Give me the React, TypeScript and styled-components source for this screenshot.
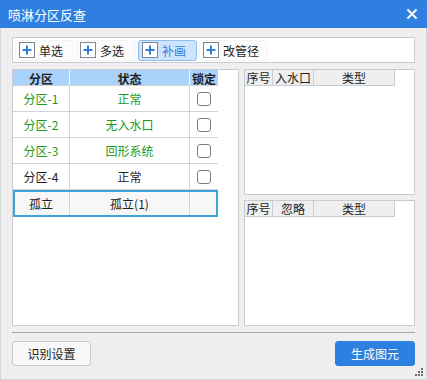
import React from 'react';
import styled, { createGlobalStyle } from 'styled-components';

const GlobalStyle = createGlobalStyle`
  html, body {
    margin: 0;
    padding: 0;
    background: #efefef;
  }
  * {
    box-sizing: border-box;
  }
`;

const FONT = `"Microsoft YaHei", "Noto Sans CJK SC", "Noto Sans", sans-serif`;

const TOOLS = [
  { label: '单选', width: 59 },
  { label: '多选', width: 60 },
  { label: '补画', width: 59, active: true },
  { label: '改管径', width: 69 },
];

const ZONES = [
  { name: '分区-1', state: '正常', green: true },
  { name: '分区-2', state: '无入水口', green: true },
  { name: '分区-3', state: '回形系统', green: true },
  { name: '分区-4', state: '正常', green: false },
];

const PlusIcon = () => (
  <svg width="16" height="16" viewBox="0 0 16 16">
    <rect x="0.5" y="0.5" width="15" height="15" fill="#fff" stroke="#7f8790" />
    <path d="M8 3.5v9M3.5 8h9" stroke="#2f7fdb" strokeWidth="2" />
  </svg>
);

const App = () => {
  return (
    <>
      <GlobalStyle />
      <Window>
        <TitleBar>
          <span>喷淋分区反查</span>
          <CloseIcon width="12" height="12" viewBox="0 0 12 12">
            <path d="M1.5 1.5l9 9M10.5 1.5l-9 9" stroke="#fff" strokeWidth="2" />
          </CloseIcon>
        </TitleBar>

        <Body>
          <Toolbar>
            {TOOLS.map((t) => (
              <ToolButton key={t.label} $active={!!t.active} $w={t.width}>
                <PlusIcon />
                <span>{t.label}</span>
              </ToolButton>
            ))}
          </Toolbar>

          <Main>
            <ZonePanel>
              <ZoneTable>
                <ZoneRow $head>
                  <ZoneCell $head>分区</ZoneCell>
                  <ZoneCell $head>状态</ZoneCell>
                  <ZoneCell $head>锁定</ZoneCell>
                </ZoneRow>
                {ZONES.map((z) => (
                  <ZoneRow key={z.name}>
                    <ZoneCell $green={z.green}>{z.name}</ZoneCell>
                    <ZoneCell $green={z.green}>{z.state}</ZoneCell>
                    <ZoneCell>
                      <Check />
                    </ZoneCell>
                  </ZoneRow>
                ))}
                <ZoneRow $selected>
                  <ZoneCell>孤立</ZoneCell>
                  <ZoneCell>孤立(1)</ZoneCell>
                  <ZoneCell />
                </ZoneRow>
              </ZoneTable>
            </ZonePanel>

            <SideColumn>
              <ListPanel>
                <ListHead>
                  <HeadCell $w={28}>序号</HeadCell>
                  <HeadCell $w={41}>入水口</HeadCell>
                  <HeadCell $w={81}>类型</HeadCell>
                </ListHead>
              </ListPanel>
              <ListPanel>
                <ListHead>
                  <HeadCell $w={28}>序号</HeadCell>
                  <HeadCell $w={41}>忽略</HeadCell>
                  <HeadCell $w={81}>类型</HeadCell>
                </ListHead>
              </ListPanel>
            </SideColumn>
          </Main>

          <Divider />

          <Footer>
            <Button>识别设置</Button>
            <Button $primary>生成图元</Button>
          </Footer>
        </Body>

        <Grip width="9" height="9" viewBox="0 0 9 9">
          <rect x="6" y="0" width="2" height="2" fill="#6e6e6e" />
          <rect x="3" y="3" width="2" height="2" fill="#6e6e6e" />
          <rect x="6" y="3" width="2" height="2" fill="#6e6e6e" />
          <rect x="0" y="6" width="2" height="2" fill="#6e6e6e" />
          <rect x="3" y="6" width="2" height="2" fill="#6e6e6e" />
          <rect x="6" y="6" width="2" height="2" fill="#6e6e6e" />
        </Grip>
      </Window>
    </>
  );
};

export default App;

const Window = styled.div`
  position: relative;
  width: 427px;
  height: 380px;
  background: #efefef;
  border: 1px solid #d4d6da;
  border-top: none;
  font-family: ${FONT};
  font-size: 12px;
  color: #1e1e1e;
  display: flex;
  flex-direction: column;
`;

const TitleBar = styled.div`
  height: 28px;
  margin: 0 -1px;
  background: #2e7fdf;
  color: #fff;
  font-size: 13px;
  display: flex;
  align-items: center;
  justify-content: space-between;
  padding: 0 9px 0 8px;
`;

const CloseIcon = styled.svg`
  display: block;
`;

const Body = styled.div`
  flex: 1;
  display: flex;
  flex-direction: column;
  padding: 9px 11px 0 11px;
`;

const Toolbar = styled.div`
  height: 26px;
  background: #fff;
  border: 1px solid #c8ccd2;
  display: flex;
  align-items: center;
  gap: 2px;
  padding: 0 2px;
`;

const ToolButton = styled.div<{ $active: boolean; $w: number }>`
  width: ${(p) => p.$w}px;
  height: 21px;
  display: flex;
  align-items: center;
  gap: 4px;
  padding-left: 3px;
  border-radius: 3px;
  border: 1px solid ${(p) => (p.$active ? '#8dbdf0' : '#f4f4f4')};
  background: ${(p) => (p.$active ? '#cde4fb' : '#fcfcfc')};
  color: ${(p) => (p.$active ? '#2e7fdf' : '#1e1e1e')};
  font-size: 12px;

  svg {
    display: block;
    flex: none;
  }
`;

const Main = styled.div`
  margin-top: 6px;
  height: 257px;
  display: flex;
  gap: 5px;
`;

const ZonePanel = styled.div`
  width: 227px;
  background: #fff;
  border: 1px solid #c8ccd2;
`;

const ZoneTable = styled.div`
  width: 205px;
  display: flex;
  flex-direction: column;
`;

const ZoneRow = styled.div<{ $head?: boolean; $selected?: boolean }>`
  display: grid;
  grid-template-columns: 57px 120px 28px;
  height: ${(p) => (p.$head ? 16 : 26)}px;
  background: ${(p) => (p.$head ? '#a9d3fb' : p.$selected ? '#f7f7f7' : '#fff')};
  border-bottom: 1px solid #d3d3d3;
  ${(p) =>
    p.$selected &&
    `
    outline: 2px solid #3aa5d6;
    outline-offset: -2px;
    border-bottom: none;
    height: 27px;
  `}
`;

const ZoneCell = styled.div<{ $head?: boolean; $green?: boolean }>`
  display: flex;
  align-items: center;
  justify-content: center;
  border-right: 1px solid #d3d3d3;
  font-size: ${(p) => (p.$head ? 12 : 12)}px;
  font-weight: ${(p) => (p.$head ? 'bold' : 'normal')};
  color: ${(p) => (p.$green ? '#1b9a1b' : '#1e1e1e')};
  ${(p) => p.$head && 'border-right-color: #f4f8fd;'}

  &:last-child {
    border-right: none;
  }
`;

const Check = styled.div`
  width: 14px;
  height: 14px;
  border: 1px solid #7d7d7d;
  border-radius: 3px;
  background: #fff;
`;

const SideColumn = styled.div`
  flex: 1;
  display: flex;
  flex-direction: column;
  gap: 5px;
`;

const ListPanel = styled.div`
  flex: 1;
  background: #fff;
  border: 1px solid #c8ccd2;
`;

const ListHead = styled.div`
  display: flex;
  height: 16px;
`;

const HeadCell = styled.div<{ $w: number }>`
  width: ${(p) => p.$w}px;
  display: flex;
  align-items: center;
  justify-content: center;
  background: #efefef;
  border-right: 1px solid #c6cdd6;
  border-bottom: 1px solid #c6cdd6;
  font-size: 12px;
  white-space: nowrap;
`;

const Divider = styled.div`
  margin-top: 6px;
  height: 1px;
  background: #a7a7a7;
`;

const Footer = styled.div`
  margin-top: 8px;
  display: flex;
  justify-content: space-between;
`;

const Button = styled.div<{ $primary?: boolean }>`
  width: ${(p) => (p.$primary ? 80 : 79)}px;
  height: 25px;
  display: flex;
  align-items: center;
  justify-content: center;
  border-radius: 3px;
  font-size: 12px;
  background: ${(p) => (p.$primary ? '#2e80e0' : '#f8f8f8')};
  color: ${(p) => (p.$primary ? '#fff' : '#1e1e1e')};
  border: 1px solid ${(p) => (p.$primary ? '#2e80e0' : '#c6c9cf')};
`;

const Grip = styled.svg`
  position: absolute;
  right: 2px;
  bottom: 2px;
  display: block;
`;
